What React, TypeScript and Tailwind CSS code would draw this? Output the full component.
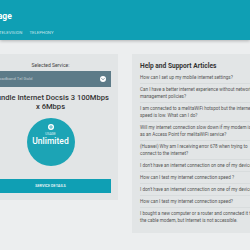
const articles: string[][] = [
  ["How can I set up my mobile internet settings?"],
  ["Can I have a better internet experience without network", "management policies?"],
  ["I am connected to a melitaWiFi hotspot but the internet", "speed is low. What can I do?"],
  ["Will my internet connection slow down if my modem is used", "as an Access Point for melitaWiFi service?"],
  ["(Huawei) Why am I receiving error 678 when trying to", "connect to the internet?"],
  ["I don't have an internet connection on one of my devices"],
  ["How can I test my internet connection speed ?"],
  ["I don't have an internet connection on one of my devices"],
  ["How can I test my internet connection speed?"],
  ["I bought a new computer or a router and connected it to", "the cable modem, but Internet is not accessible."],
];

function ChevronCircle() {
  return (
    <svg width="6" height="6" viewBox="0 0 12 12">
      <circle cx="6" cy="6" r="6" fill="#ffffff" />
      <path d="M3.5 5 L6 7.5 L8.5 5" fill="none" stroke="#5b7886" strokeWidth="1.6" strokeLinecap="round" strokeLinejoin="round" />
    </svg>
  );
}

function UsageIcon() {
  return (
    <svg width="6" height="6" viewBox="0 0 12 12">
      <circle cx="6" cy="6" r="6" fill="#ffffff" />
      <path d="M3.5 6 A2.5 2.5 0 0 1 8.5 6 M8.5 6 A2.5 2.5 0 0 1 3.5 6" fill="none" stroke="#1aa3b4" strokeWidth="1.4" />
      <circle cx="6" cy="6" r="1" fill="#1aa3b4" />
    </svg>
  );
}

export default function App() {
  return (
    <div className="w-[250px] h-[250px] overflow-hidden bg-[#eceeef] font-[Roboto,sans-serif]">
      <header className="h-[40px] bg-[#0f9fb4] shadow-[0_1px_3px_rgba(0,0,0,0.25)] relative">
        <div className="-ml-[26px] pt-[11px] flex flex-col">
          <h1 className="text-[8.5px] leading-[10px] font-bold text-white">My Usage</h1>
          <nav className="flex gap-[6px] mt-[9px] text-[4.3px] leading-[6px] text-white/75">
            <span className="text-white border-b-2 border-[#c6d94a] pb-[2px] -ml-[1px]">INTERNET</span>
            <span>TELEVISION</span>
            <span className="ml-[1px]">TELEPHONY</span>
          </nav>
        </div>
      </header>

      <main className="flex items-start gap-[14px] mt-[14px] -ml-[17px]">
        <section className="w-[135px] shrink-0 bg-[#e2e5e6] pt-[8px] pb-[7px] px-[7px] flex flex-col items-center">
          <p className="text-[5px] leading-[6px] text-[#444]">Selected Service:</p>
          <div className="w-full h-[16px] mt-[3px] bg-[#5d7b88] flex items-center justify-between px-[5px]">
            <span className="text-[4.3px] text-white/60">Broadband Tel Gold</span>
            <ChevronCircle />
          </div>
          <h2 className="mt-[6px] text-[7.6px] leading-[9px] text-[#333] text-center font-medium">
            Bundle Internet Docsis 3 100Mbps x 6Mbps
          </h2>
          <div className="mt-[7px] w-[48px] h-[48px] rounded-full bg-[#1ca4b5] flex flex-col items-center pt-[6px]">
            <UsageIcon />
            <span className="mt-[2px] text-[3.3px] leading-[4px] text-white/80">USAGE</span>
            <span className="text-[8.5px] leading-[11px] font-medium text-white">Unlimited</span>
          </div>
          <button className="mt-[13px] w-full h-[14px] bg-[#0f9fb4] text-white text-[3.8px] font-medium">
            SERVICE DETAILS
          </button>
        </section>

        <section className="w-[150px] shrink-0 bg-[#e2e5e6] pt-[8px] pb-[7px] pl-[8px] pr-[14px] overflow-hidden">
          <h3 className="text-[6.6px] leading-[8px] font-bold text-[#333] mb-[2px]">Help and Support Articles</h3>
          <ul>
            {articles.map((lines, i) => (
              <li
                key={i}
                className="py-[2px] border-b border-[#d8dcdd] last:border-b-0 text-[4.6px] leading-[7px] text-[#555]"
              >
                {lines.map((l, j) => (
                  <span key={j} className="block whitespace-nowrap">{l}</span>
                ))}
              </li>
            ))}
          </ul>
        </section>
      </main>
    </div>
  );
}
